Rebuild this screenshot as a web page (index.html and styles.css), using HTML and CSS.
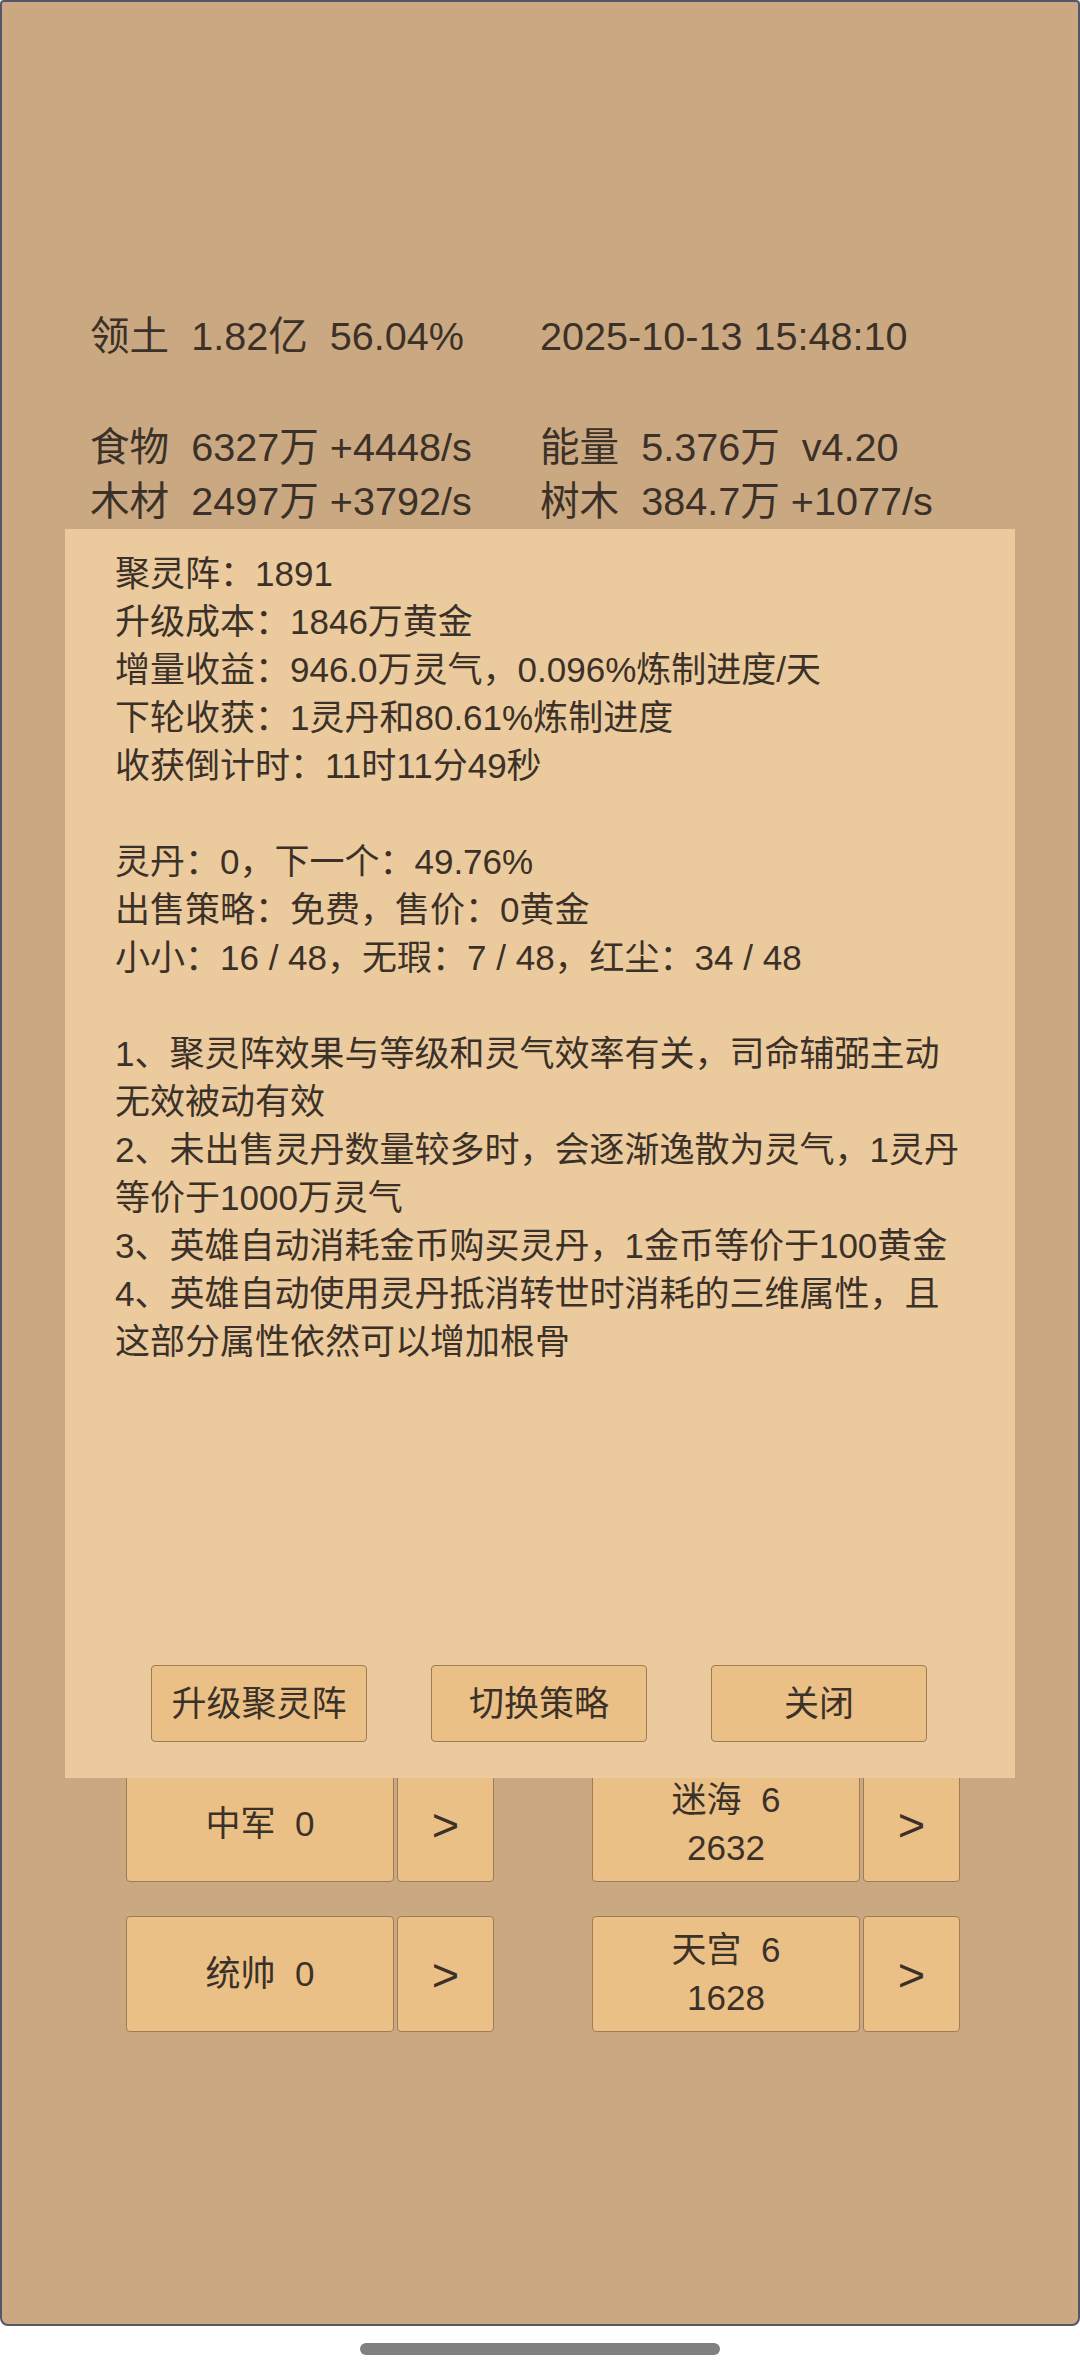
FILE: index.html
```html
<!DOCTYPE html>
<html lang="zh-CN">
<head>
<meta charset="utf-8">
<title>聚灵阵</title>
<link rel="stylesheet" href="styles.css">
</head>
<body>
<div class="screen">
  <div class="app">
    <div class="stats">
      <div class="stat-row head"><span class="stat">领土  1.82亿  56.04%</span><span class="stat">2025-10-13 15:48:10</span></div>
      <div class="stat-row"><span class="stat">食物  6327万 +4448/s</span><span class="stat">能量  5.376万  v4.20</span></div>
      <div class="stat-row"><span class="stat">木材  2497万 +3792/s</span><span class="stat">树木  384.7万 +1077/s</span></div>
    </div>

    <div class="board">
      <div class="board-row">
        <div class="pair"><button class="btn main"><span class="ln">中军  0</span></button><button class="btn arrow">&gt;</button></div>
        <div class="pair"><button class="btn main"><span class="ln">迷海  6</span><span class="ln">2632</span></button><button class="btn arrow">&gt;</button></div>
      </div>
      <div class="board-row">
        <div class="pair"><button class="btn main"><span class="ln">统帅  0</span></button><button class="btn arrow">&gt;</button></div>
        <div class="pair"><button class="btn main"><span class="ln">天宫  6</span><span class="ln">1628</span></button><button class="btn arrow">&gt;</button></div>
      </div>
    </div>

    <div class="panel">
      <div class="panel-body">
        <div class="block">
          <p>聚灵阵：1891</p>
          <p>升级成本：1846万黄金</p>
          <p>增量收益：946.0万灵气，0.096%炼制进度/天</p>
          <p>下轮收获：1灵丹和80.61%炼制进度</p>
          <p>收获倒计时：11时11分49秒</p>
        </div>
        <div class="block">
          <p>灵丹：0，下一个：49.76%</p>
          <p>出售策略：免费，售价：0黄金</p>
          <p>小小：16 / 48，无瑕：7 / 48，红尘：34 / 48</p>
        </div>
        <div class="block">
          <p>1、聚灵阵效果与等级和灵气效率有关，司命辅弼主动无效被动有效</p>
          <p>2、未出售灵丹数量较多时，会逐渐逸散为灵气，1灵丹等价于1000万灵气</p>
          <p>3、英雄自动消耗金币购买灵丹，1金币等价于100黄金</p>
          <p>4、英雄自动使用灵丹抵消转世时消耗的三维属性，且这部分属性依然可以增加根骨</p>
        </div>
      </div>
      <div class="actions">
        <button class="btn action">升级聚灵阵</button>
        <button class="btn action">切换策略</button>
        <button class="btn action">关闭</button>
      </div>
    </div>
  </div>
  <div class="home-bar"></div>
</div>
</body>
</html>
```

FILE: styles.css
```css
html, body {
  margin: 0;
  padding: 0;
  background: #ffffff;
}

body {
  font-family: "Liberation Sans", "Noto Sans CJK SC", sans-serif;
  color: #3b3128;
  text-autospace: no-autospace;
}

.screen {
  width: 1080px;
  height: 2376px;
  background: #ffffff;
}

.app {
  position: relative;
  box-sizing: border-box;
  width: 1080px;
  height: 2326px;
  padding-top: 307px;
  background: #caa982;
  border: 2px solid #55566a;
  border-radius: 4px 4px 8px 8px;
}

.stats {
  padding-left: 88px;
  font-size: 39.6px;
  line-height: 54px;
}

.stat-row {
  display: grid;
  grid-template-columns: 450px 450px;
}

.stat {
  white-space: pre;
}

.stat-row.head {
  margin-bottom: 57px;
}

.board {
  margin-top: 1238px;
  padding-left: 124px;
  display: flex;
  flex-direction: column;
  gap: 34px;
}

.board-row {
  display: flex;
  gap: 98px;
}

.pair {
  display: flex;
  gap: 3px;
}

.btn {
  margin: 0;
  padding: 0;
  font-family: inherit;
  color: #3b3128;
  background: #eac087;
  border: 1px solid #9e7c55;
  border-radius: 4px;
  box-sizing: border-box;
}

.main {
  width: 268px;
  height: 116px;
  font-size: 35px;
  line-height: 48px;
  display: flex;
  flex-direction: column;
  align-items: center;
  justify-content: center;
}

.ln {
  display: block;
  white-space: pre;
}

.arrow {
  width: 97px;
  height: 116px;
  font-size: 47px;
  line-height: 1;
}

.panel {
  position: absolute;
  left: 63px;
  top: 527px;
  width: 950px;
  height: 1249px;
  box-sizing: border-box;
  padding: 21px 52px 36px 50px;
  background: #ebcb9e;
  display: flex;
  flex-direction: column;
}

.panel-body {
  flex: 1;
  font-size: 35px;
  line-height: 48px;
}

.block {
  margin-bottom: 48px;
}

.block p {
  margin: 0;
}

.actions {
  display: flex;
  justify-content: center;
  gap: 64px;
}

.action {
  width: 216px;
  height: 77px;
  font-size: 35px;
  line-height: 1;
}

.home-bar {
  width: 360px;
  height: 12px;
  margin: 17px auto 0;
  border-radius: 6px;
  background: #808080;
}
```
